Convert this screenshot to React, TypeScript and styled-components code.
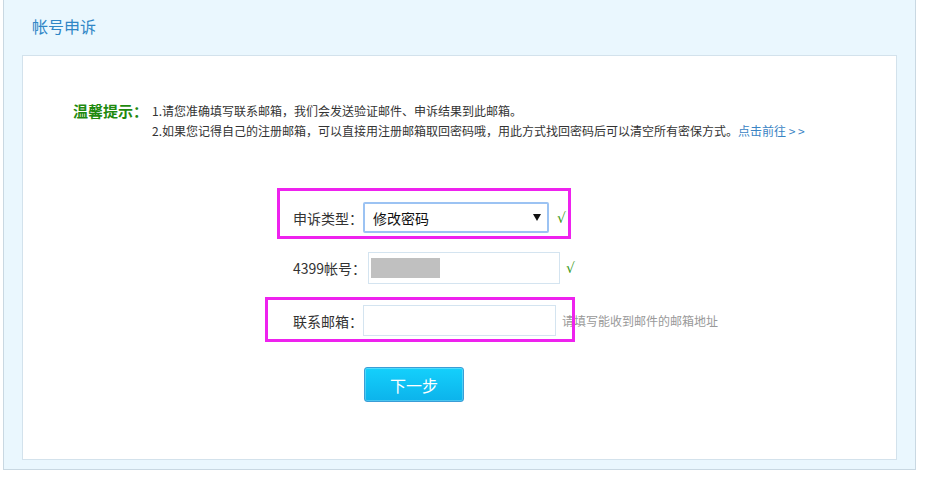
import React from "react";
import styled, { createGlobalStyle } from "styled-components";

const Global = createGlobalStyle`
  html, body { margin: 0; padding: 0; background: #fff; }
  body { font-family: "Noto Sans CJK SC", "Noto Sans", sans-serif; color: #333; }
`;

const Panel = styled.div`
  margin-left: 3px;
  width: 913px;
  background: #eaf7fe;
  border: 1px solid #c9d8e2;
  border-top: none;
  padding: 0 18px 9px 18px;
  box-sizing: border-box;
`;

const Header = styled.div`
  height: 55px;
  padding-left: 10px;
  box-sizing: border-box;
  display: flex;
  align-items: flex-start;
`;

const Title = styled.h2`
  margin: 0;
  padding-top: 15px;
  font-size: 16px;
  font-weight: normal;
  line-height: 22px;
  color: #2f86c6;
`;

const Box = styled.div`
  background: #fff;
  border: 1px solid #d3e2ec;
  height: 405px;
  box-sizing: border-box;
  padding-top: 45px;
`;

const Tips = styled.div`
  display: flex;
  padding-left: 50px;
`;

const TipLabel = styled.div`
  width: 79px;
  font-size: 15px;
  font-weight: bold;
  color: #1f8a0f;
  line-height: 20px;
  white-space: nowrap;
`;

const TipLines = styled.div`
  font-size: 12px;
  line-height: 20px;
  color: #333;
`;

const TipLine = styled.div`
  white-space: nowrap;
`;

const TipLink = styled.a`
  color: #3a84c4;
  text-decoration: none;
`;

const Form = styled.div`
  display: flex;
  flex-direction: column;
  padding-left: 270px;
  padding-top: 61px;
`;

const Row = styled.div<{ $gap: number }>`
  position: relative;
  display: flex;
  align-items: center;
  margin-top: ${(p) => p.$gap}px;
`;

const Label = styled.span`
  font-size: 14px;
  color: #333;
  white-space: nowrap;
`;

const FakeSelect = styled.div`
  width: 186px;
  height: 31px;
  box-sizing: border-box;
  border: 2px solid #9cc3f3;
  border-radius: 2px;
  display: flex;
  align-items: center;
  justify-content: space-between;
  padding: 0 6px 0 8px;
  font-size: 14px;
  color: #111;
`;

const Input = styled.div<{ $w: number; $h: number; $ml: number }>`
  width: ${(p) => p.$w}px;
  height: ${(p) => p.$h}px;
  margin-left: ${(p) => p.$ml}px;
  box-sizing: border-box;
  border: 1px solid #d4e4f0;
  background: #fff;
  display: flex;
  align-items: center;
  padding-left: 2px;
`;

const Masked = styled.div`
  width: 69px;
  height: 20px;
  background: #c0c0c0;
`;

const Check = styled.span<{ $ml: number }>`
  margin-left: ${(p) => p.$ml}px;
  font-size: 14px;
  color: #3a9a1a;
  font-family: "DejaVu Sans", sans-serif;
`;

const Hint = styled.span`
  margin-left: 6px;
  font-size: 12px;
  color: #999;
  white-space: nowrap;
`;

const Highlight = styled.div<{ $l: number; $t: number; $w: number; $h: number }>`
  position: absolute;
  left: ${(p) => p.$l}px;
  top: ${(p) => p.$t}px;
  width: ${(p) => p.$w}px;
  height: ${(p) => p.$h}px;
  border: 3px solid #ee22ee;
  box-sizing: border-box;
  pointer-events: none;
`;

const Button = styled.button`
  margin-top: 31px;
  margin-left: 71px;
  width: 100px;
  height: 35px;
  border: 1px solid #3b9dd6;
  border-radius: 3px;
  background: linear-gradient(#14d0fc, #0cb3eb);
  box-shadow: inset 0 0 0 1px rgba(255, 255, 255, 0.25);
  color: #fff;
  font-size: 16px;
  font-family: "Noto Sans CJK SC", sans-serif;
  cursor: pointer;
  padding: 0;
  align-self: flex-start;
`;

export default function App() {
  return (
    <>
      <Global />
      <Panel>
        <Header>
          <Title>帐号申诉</Title>
        </Header>
        <Box>
          <Tips>
            <TipLabel>温馨提示：</TipLabel>
            <TipLines>
              <TipLine>1.请您准确填写联系邮箱，我们会发送验证邮件、申诉结果到此邮箱。</TipLine>
              <TipLine>
                2.如果您记得自己的注册邮箱，可以直接用注册邮箱取回密码哦，用此方式找回密码后可以清空所有密保方式。
                <TipLink href="#">点击前往 &gt; &gt;</TipLink>
              </TipLine>
            </TipLines>
          </Tips>
          <Form>
            <Row $gap={0}>
              <Highlight $l={-16} $t={-14} $w={294} $h={51} />
              <Label>申诉类型：</Label>
              <FakeSelect>
                <span>修改密码</span>
                <svg width="8" height="7" viewBox="0 0 8 7">
                  <path d="M0 0 L8 0 L4 7 Z" fill="#111" />
                </svg>
              </FakeSelect>
              <Check $ml={8}>√</Check>
            </Row>
            <Row $gap={19}>
              <Label>4399帐号：</Label>
              <Input $w={192} $h={32} $ml={2}>
                <Masked />
              </Input>
              <Check $ml={6}>√</Check>
            </Row>
            <Row $gap={21}>
              <Highlight $l={-28} $t={-8} $w={310} $h={45} />
              <Label>联系邮箱：</Label>
              <Input $w={193} $h={31} $ml={0} />
              <Hint>请填写能收到邮件的邮箱地址</Hint>
            </Row>
            <Button>下一步</Button>
          </Form>
        </Box>
      </Panel>
    </>
  );
}
